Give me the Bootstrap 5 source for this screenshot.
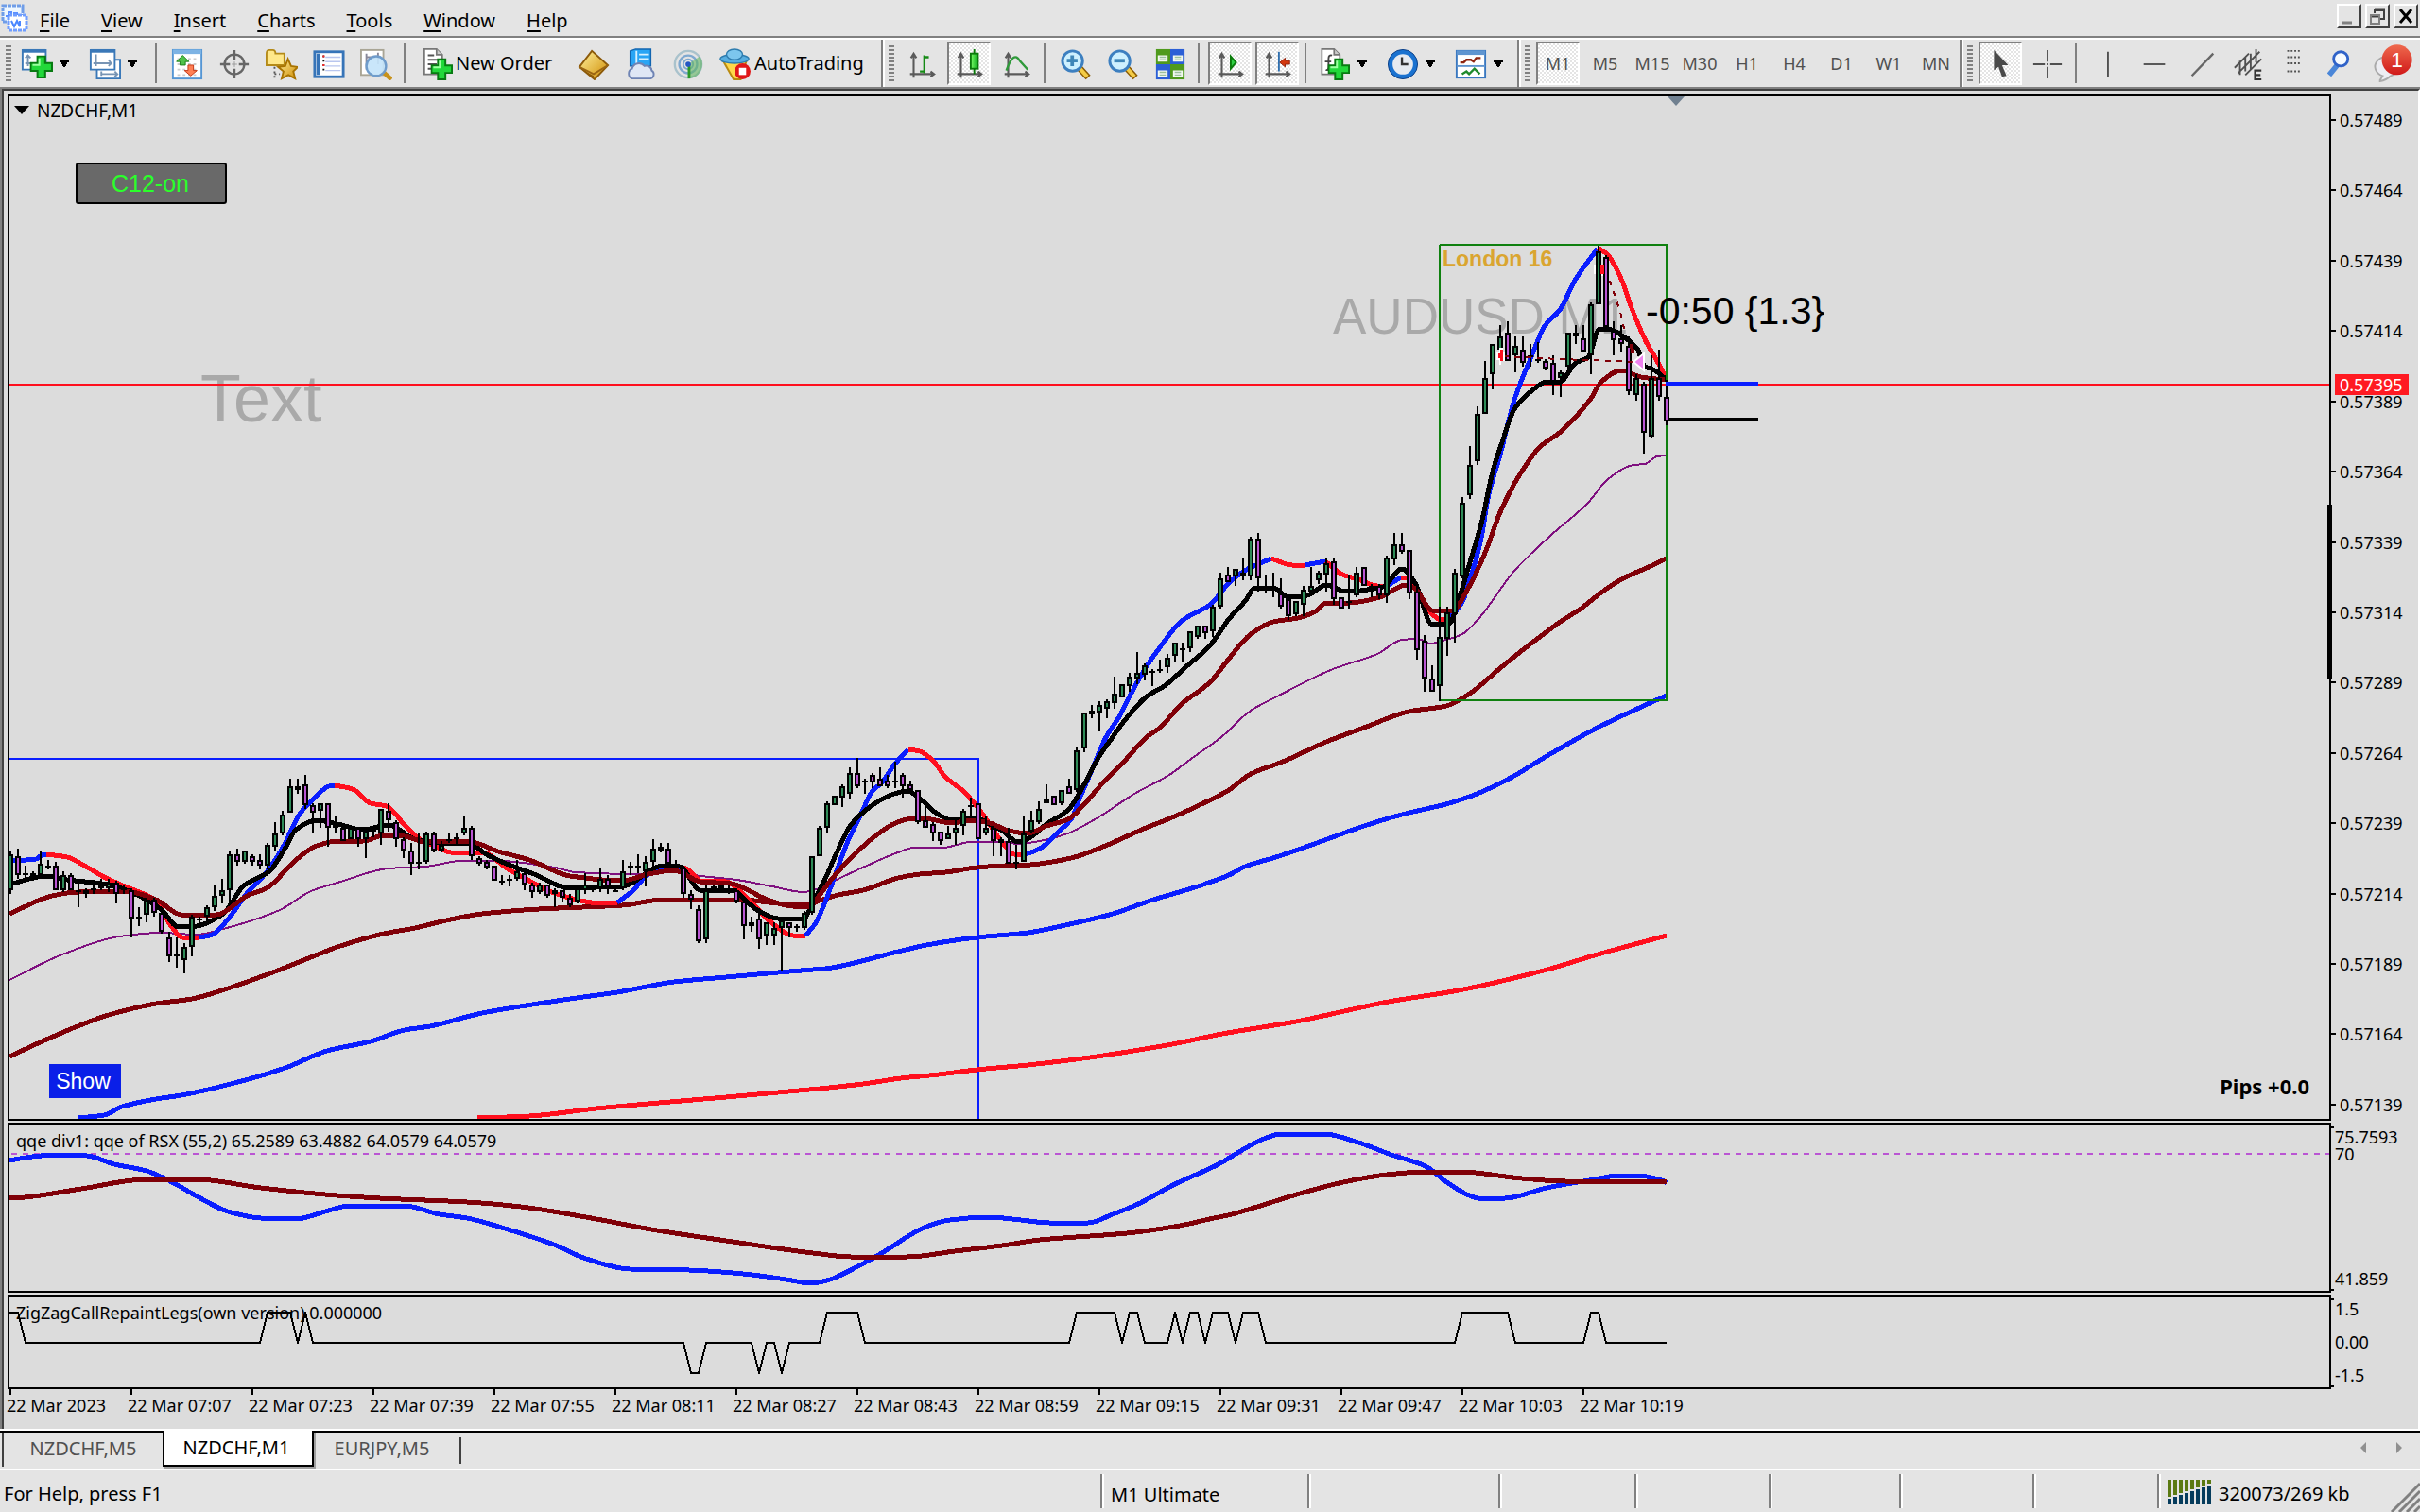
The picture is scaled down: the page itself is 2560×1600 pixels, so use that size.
<!DOCTYPE html>
<html lang="en">
<head>
<meta charset="utf-8">
<meta name="viewport" content="width=device-width, initial-scale=1">
<title>NZDCHF,M1</title>
<link href="https://cdn.jsdelivr.net/npm/bootstrap@5.3.0/dist/css/bootstrap.min.css" rel="stylesheet">
<style>
:root{--face:#e4e4e4;--canvas:#dcdcdc;--edge:#808080}
body{background:var(--face);color:#000;font-family:"Noto Sans","Open Sans",sans-serif;font-size:20px;line-height:24px;overflow:hidden}
.menubar{height:40px;border-bottom:2px solid var(--edge)}
.menubar a{color:#000;text-decoration:none;padding:6px 17px 0 16px}
.menubar u{text-underline-offset:3px}
.appicon{width:30px;height:30px;margin:0 -4px 0 0}
.winbuttons{margin-right:2px}
.winbtn{width:26px;height:26px;padding:0;margin-left:4px;border:2px solid;border-color:#fff #404040 #404040 #fff;background:var(--face);display:flex}
.toolbars{height:52px;border-top:2px solid #fff}
.band{border-right:2px solid var(--edge);box-shadow:2px 0 0 #fff;height:50px;padding-left:6px}
.band-last{border:0;box-shadow:none}
.grip{width:6px;height:38px;margin-right:4px;background:repeating-linear-gradient(var(--edge) 0 2px,transparent 2px 4px)}
.tool{width:46px;height:46px;margin:0 2px;padding:0;border:2px solid transparent;border-radius:0;background:none;color:#000;font-size:20px;line-height:24px;display:flex;align-items:center;justify-content:center}
.tool svg{width:34px;height:34px;flex:none;margin-top:2px}
.tool.drop{width:68px;justify-content:flex-start;padding-left:2px;gap:6px}
.tool.drop .caret{width:12px;height:8px}
.tool.pressed{border-color:var(--edge) #fff #fff var(--edge);background:repeating-conic-gradient(#fff 0 25%,#e4e4e4 0 50%) 0 0/4px 4px}
.tool.period{font-size:18px;color:#505050}
.tool.labelled{gap:2px;width:163px;justify-content:start;padding-left:6px}
.tool.labelled-wide{gap:4px;width:175px;justify-content:start;padding-left:3px}
.splitter{width:13px;height:42px;background:linear-gradient(var(--edge),var(--edge)) 4px 0/2px 100% no-repeat}
.workspace{border-top:2px solid var(--edge);border-left:2px solid var(--edge);min-height:0}
.chartwin{border-top:2px solid #404040;border-left:2px solid #404040;border-right:2px solid #fff;background:var(--canvas);padding:4px 0 0 4px;gap:2px;font-size:18px;min-height:0}
.plot{border:2px solid #000;position:relative;overflow:hidden;min-width:0}
.plot svg.drawing{position:absolute;inset:0;width:100%;height:100%}
.scale{width:92px;position:relative}
.price-scale{padding:15px 0 5px 9px}
.price-scale div{position:relative}
.price-scale div::before{content:"";position:absolute;left:-9px;top:11px;width:5px;height:2px;background:#000}
.small-scale{padding:6px 0 6px 4px;line-height:18px}
.small-scale::before,.small-scale::after{content:"";position:absolute;left:0;top:4px;width:3px;height:2px;background:#000}
.small-scale::after{top:auto;bottom:2px}
.pricetag{position:absolute;left:4px;right:10px;top:296px;height:22px;line-height:22px;padding-left:5px;background:#ff1a22;color:#fff}
.volbar{position:absolute;left:-4px;top:434px;width:5px;height:184px;background:#000}
.qqe{height:180px}.zigzag{height:100px}
.timeline{height:42px;margin-top:-2px}
.timeline div{width:128px;flex:none;padding-top:5px;white-space:nowrap;position:relative;left:-1px}
.timeline div::before{content:"";position:absolute;left:3px;top:0;width:2px;height:6px;background:#000}
.ptitle{position:absolute;left:7px;top:5px}
.symbol{left:5px;font-size:19px;top:3px}
.onbtn{position:absolute;left:70px;top:70px;width:160px;height:44px;border:2px solid #000;border-radius:3px;background:#696969;color:#2bff2b;font:25px/38px "Liberation Sans",sans-serif;padding:0 2px 0 0}
.showbtn{position:absolute;left:42px;bottom:22px;width:76px;height:36px;border:0;background:#0a1fe8;color:#fff;font:23px/36px "Liberation Sans",sans-serif;padding:0 4px 0 0}
.tabstrip{height:44px;border-top:2px solid #fff;border-bottom:2px solid #fff}
.tabs-in{border-top:2px solid #000;height:40px}
.tabs-in button{height:36px;border:0;background:none;color:#505050;font-size:20px;padding:0 0 3px}
.t-first{width:170px;border-left:2px solid #404040!important;margin-left:2px}
.tabs-in .t-last{width:154px;padding:0 10px 3px 0}
.t-end{width:2px;height:28px;margin-top:5px;background:#404040}
.tabs-in .t-on{width:160px;margin-top:-2px;height:38px;background:#fff;color:#000;border:2px solid #000;border-top:0;padding:0 4px 0 0;box-shadow:2px 2px 0 #a0a0a0}
.status{height:44px;line-height:42px}
.status-text{padding-top:6px}
.cell{height:36px;border-left:2px solid var(--edge);box-shadow:inset 2px 0 0 #fff;padding:2px 0 0 9px;line-height:40px;white-space:nowrap}
</style>
</head>
<body class="d-flex flex-column vh-100">
<svg width="0" height="0" class="position-absolute" aria-hidden="true">
 <defs>
  <linearGradient id="gGreen" x1="0" x2="1"><stop offset="0" stop-color="#7dff6a"/><stop offset="1" stop-color="#0aa81a"/></linearGradient>
  <linearGradient id="gGold" x1="0" x2="1" y2="1"><stop offset="0" stop-color="#fff2a0"/><stop offset="1" stop-color="#cf8b00"/></linearGradient>
  <linearGradient id="gRed" x1="0" y1="0" x2="0" y2="1"><stop offset="0" stop-color="#ef6a4e"/><stop offset="1" stop-color="#d01818"/></linearGradient>
  <symbol id="caret" viewBox="0 0 12 8"><path d="M1 0H11V2H9V4H8V6H7V7H5V6H4V4H3V2H1Z"/></symbol>
  <symbol id="plus" viewBox="0 0 24 24"><path d="M8 1h8v7h7v8h-7v7H8v-7H1V8h7z" fill="#22d83a" stroke="#087a12" stroke-width="2"/><path d="M10 3v7H3" stroke="#9dffa0" stroke-width="2" fill="none"/></symbol>
  <symbol id="axes" viewBox="0 0 32 32"><path d="M6 30V4M2 26H28M3 8L6 3L9 8M25 23L29 26L25 29" stroke="#5a5a5a" stroke-width="2.2" fill="none"/></symbol>
  <symbol id="lens" viewBox="0 0 34 34"><path d="M20 20L30 31" stroke="#8a5a00" stroke-width="7"/><path d="M20 20L29 30" stroke="#f4cc45" stroke-width="4"/><circle cx="13" cy="13" r="11" fill="#cdf0ff" stroke="#3c7fc0" stroke-width="3"/></symbol>
  <symbol id="sheet" viewBox="0 0 28 34"><path d="M2 1H17L24 8V32H2Z" fill="#fff" stroke="#777" stroke-width="2"/><path d="M17 1V8H24" fill="#ccc" stroke="#777" stroke-width="2"/></symbol>
 </defs>
</svg>

<nav class="menubar d-flex align-items-center">
 <svg class="appicon" viewBox="0 0 30 30"><rect x="3" y="2" width="21" height="17" fill="#eef7ff" stroke="#6f9de8" stroke-width="3" stroke-dasharray="4 1"/><path d="M6 13h3v-4h3v5h3v-4h3v5" stroke="#5a8fff" stroke-width="2" fill="none"/><rect x="9" y="12" width="19" height="16" fill="#fff" stroke="#6f9dff" stroke-width="3" stroke-dasharray="4 1"/><path d="M12 18l3 6 3-6 3 6V18" stroke="#4a86ff" stroke-width="2" fill="none"/></svg>
 <a href="#"><u>F</u>ile</a><a href="#"><u>V</u>iew</a><a href="#"><u>I</u>nsert</a><a href="#"><u>C</u>harts</a><a href="#"><u>T</u>ools</a><a href="#"><u>W</u>indow</a><a href="#"><u>H</u>elp</a>
 <div class="winbuttons ms-auto d-flex align-self-start pt-1">
  <button class="winbtn" aria-label="Minimize"><svg width="22" height="22"><path d="M4 18H14" stroke="#808080" stroke-width="3"/></svg></button>
  <button class="winbtn" aria-label="Restore"><svg width="22" height="22" fill="none" stroke="#404040" stroke-width="2"><path d="M8 8V5H18V14H14"/><path d="M8 4H19M3 11H14" stroke-width="3"/><path d="M4 10H13V19H4Z" stroke="#808080"/></svg></button>
  <button class="winbtn" aria-label="Close"><svg width="22" height="22"><path d="M5 4L17 18M17 4L5 18" stroke="#000" stroke-width="3"/></svg></button>
 </div>
</nav>

<div class="toolbars d-flex">
 <div class="band d-flex align-items-center">
  <span class="grip"></span>
  <button class="tool drop" aria-label="New chart"><svg viewBox="0 0 36 36"><path d="M2 2H28V24H2Z" fill="#fff" stroke="#3a78b8" stroke-width="2"/><path d="M2 3H28" stroke="#3a78b8" stroke-width="4"/><path d="M8 8V20M5 11l3-3 3 3M5 17H15" stroke="#7794b4" stroke-width="2" fill="none"/><use href="#plus" x="10" y="8" width="26" height="26"/></svg><svg class="caret"><use href="#caret"/></svg></button>
  <button class="tool drop" aria-label="Profiles"><svg viewBox="0 0 36 36"><path d="M9 13H35V34H9Z" fill="#fff" stroke="#3a78b8" stroke-width="2"/><path d="M2 2H29V24H2Z" fill="#fff" stroke="#3a78b8" stroke-width="2"/><path d="M2 3H29" stroke="#3a78b8" stroke-width="4"/><path d="M8 7V20M5 17H25M22 13l3 4-3 3M13 29H32M29 26l3 3-3 3M14 26V31" stroke="#7794b4" stroke-width="2" fill="none"/></svg><svg class="caret"><use href="#caret"/></svg></button>
  <span class="splitter"></span>
  <button class="tool" aria-label="Market Watch"><svg viewBox="0 0 36 36"><rect x="2" y="2" width="32" height="32" fill="#fff" stroke="#5596d4" stroke-width="2"/><path d="M2 4H34" stroke="#7db3e4" stroke-width="5"/><path d="M7 12H31M7 18H31M7 24H31M7 30H31" stroke="#ccc" stroke-width="2" stroke-dasharray="3 3"/><path d="M13 8L20 15H16V19H10V15H6Z" fill="#4fc24a" stroke="#1c7d18"/><path d="M22 31L29 25H25V19H19V25H15Z" fill="#ff8055" stroke="#c23411"/></svg></button>
  <button class="tool" aria-label="Data Window"><svg viewBox="0 0 36 36" fill="none" stroke="#666" stroke-width="2.5"><circle cx="18" cy="18" r="11"/><path d="M18 2V13M18 23V34M2 18H13M23 18H34"/><path d="M18 15V21M15 18H21" stroke="#999" stroke-width="1"/></svg></button>
  <button class="tool" aria-label="Navigator"><svg viewBox="0 0 36 36"><path d="M1 6Q1 2 4 2H8Q11 2 11 6H21V19H1Z" fill="#ffe88a" stroke="#b48a18" stroke-width="2"/><path d="M10 21V34M10 29H16" stroke="#555" stroke-width="2" stroke-dasharray="2 3"/><path d="M25 12L28.500 20L36 21L31 26L33 34L25.500 30L18 34L20 26L14 21L22 20Z" fill="url(#gGold)" stroke="#a87300" stroke-width="2"/></svg></button>
  <button class="tool" aria-label="Terminal"><svg viewBox="0 0 36 36"><rect x="2" y="4" width="32" height="28" fill="#fff" stroke="#3674b8" stroke-width="3"/><path d="M6 6V30" stroke="#3674b8" stroke-width="4"/><path d="M14 10H31M14 15H31M14 20H31M14 25H31" stroke="#b9c6ee" stroke-width="1.500"/><path d="M12 8V27" stroke="#111" stroke-width="2" stroke-dasharray="2 3"/><path d="M12 8V22" stroke="#f22" stroke-width="2" stroke-dasharray="2 8"/></svg></button>
  <button class="tool" aria-label="Strategy Tester"><svg viewBox="0 0 36 36"><rect x="1" y="2" width="25" height="28" fill="#fff" stroke="#a9a595" stroke-width="2"/><path d="M7 6V24M11 9V14M20 5V18M7 10H22" stroke="#889" stroke-width="2"/><path d="M25 26L35 35" stroke="#c8921a" stroke-width="5"/><circle cx="18" cy="20" r="11" fill="#c4e4fa" fill-opacity=".92" stroke="#6f9ccb" stroke-width="2.500"/></svg></button>
  <span class="splitter"></span>
  <button class="tool labelled"><svg viewBox="0 0 36 36"><use href="#sheet" x="0" y="0" width="28" height="31"/><path d="M7 8H14M7 13H20M7 18H17M7 23H12" stroke="#555" stroke-width="2"/><use href="#plus" x="10" y="11" width="25" height="25"/></svg><span>New Order</span></button>
  <button class="tool" aria-label="MetaEditor"><svg viewBox="0 0 36 36"><path d="M2 21L16 3L34 19L19 35Z" fill="url(#gGold)" stroke="#8c5a0a" stroke-width="2"/><path d="M2 21L18 29L34 19" fill="none" stroke="#9a6412" stroke-width="2"/><path d="M4 23L18 31V34Z" fill="#8c5a0a"/></svg></button>
  <button class="tool" aria-label="Virtual Hosting"><svg viewBox="0 0 36 36"><path d="M6 3L12 1H29V20H6Z" fill="#29a5f5" stroke="#1265b0" stroke-width="1.500"/><path d="M13 3V20M16 7H27M16 12H27" stroke="#d7f1ff" stroke-width="2"/><path d="M8 34A6 6 0 0 1 8 23A8 8 0 0 1 22 20A6 6 0 0 1 30 25A5 5 0 0 1 29 34Z" fill="#dfe7f5" stroke="#6f84b4" stroke-width="2"/></svg></button>
  <button class="tool" aria-label="Signals"><svg viewBox="0 0 36 36" fill="none"><circle cx="18" cy="18" r="15" stroke="#a9c2cc" stroke-width="2.500"/><circle cx="18" cy="18" r="10" stroke="#7fa9d0" stroke-width="2.500"/><circle cx="18" cy="18" r="5.500" stroke="#7aa6cf" stroke-width="2"/><path d="M18 18V34A16 16 0 0 0 31 9Z" fill="#62b562" fill-opacity=".6"/><path d="M19 18V34" stroke="#2a9a2a" stroke-width="3"/><circle cx="18" cy="18" r="3" fill="#2457c4"/></svg></button>
  <button class="tool labelled-wide"><svg viewBox="0 0 36 36"><path d="M4 12L32 12L25 35H17Z" fill="#ffd84a" stroke="#b98a10" stroke-width="2"/><ellipse cx="18" cy="12" rx="16" ry="5" fill="#57aee0" stroke="#2e7cae" stroke-width="1.500"/><ellipse cx="18" cy="7" rx="9" ry="6" fill="#7cc6ee" stroke="#2e7cae" stroke-width="1.500"/><circle cx="27" cy="26" r="9" fill="#e01818"/><rect x="23" y="22" width="8" height="8" fill="#fff"/></svg><span>AutoTrading</span></button>
 </div>
 <div class="band d-flex align-items-center">
  <span class="grip"></span>
  <button class="tool" aria-label="Bar Chart"><svg viewBox="0 0 36 36"><use href="#axes" x="3" y="3" width="32" height="32"/><path d="M16 26H21M21 28V8M21 10H26" stroke="#158a15" stroke-width="2.500" fill="none"/></svg></button>
  <button class="tool pressed" aria-label="Candlesticks"><svg viewBox="0 0 36 36"><use href="#axes" x="3" y="3" width="32" height="32"/><path d="M24 1V29" stroke="#0a7a0a" stroke-width="2"/><rect x="20" y="6" width="8" height="17" fill="url(#gGreen)" stroke="#0a7a0a" stroke-width="2"/></svg></button>
  <button class="tool" aria-label="Line Chart"><svg viewBox="0 0 36 36"><use href="#axes" x="3" y="3" width="32" height="32"/><path d="M7 25Q15 2 22 14L31 24" stroke="#2f9a3a" stroke-width="2.500" fill="none"/></svg></button>
  <span class="splitter"></span>
  <button class="tool" aria-label="Zoom In"><svg viewBox="0 0 36 36"><use href="#lens" x="1" y="1" width="35" height="35"/><path d="M8 14H20M14 8V20" stroke="#3f86b8" stroke-width="4"/></svg></button>
  <button class="tool" aria-label="Zoom Out"><svg viewBox="0 0 36 36"><use href="#lens" x="1" y="1" width="35" height="35"/><path d="M8 14H20" stroke="#3f86b8" stroke-width="4"/></svg></button>
  <button class="tool" aria-label="Tile Windows"><svg viewBox="0 0 36 36"><path d="M2 1H18V18H2Z" fill="#4f9a1c"/><path d="M18 1H34V18H18Z" fill="#2b5fd6"/><path d="M2 18H18V35H2Z" fill="#2b5fd6"/><path d="M18 18H34V35H18Z" fill="#4f9a1c"/><path d="M4 8H15V15H4ZM21 8H32V15H21ZM4 25H15V32H4ZM21 25H32V32H21Z" fill="#f2f8f0"/><path d="M6 10H13M6 13H13M23 10H30M23 13H30M6 27H13M6 30H13M23 27H30M23 30H30" stroke="#9cc09c" stroke-width="1.500"/></svg></button>
  <span class="splitter"></span>
  <button class="tool pressed" aria-label="Auto Scroll"><svg viewBox="0 0 36 36"><use href="#axes" x="3" y="3" width="32" height="32"/><path d="M19 9L25 16L19 23Z" fill="#2fd044" stroke="#0a7a0a" stroke-width="2"/></svg></button>
  <button class="tool pressed" aria-label="Chart Shift"><svg viewBox="0 0 36 36"><use href="#axes" x="3" y="3" width="32" height="32"/><path d="M20 4V26" stroke="#2f6fae" stroke-width="2"/><path d="M21 16L27 11V14H32V18H27V21Z" fill="#d4380e" stroke="#94200a"/></svg></button>
  <span class="splitter"></span>
  <button class="tool drop" aria-label="Indicators"><svg viewBox="0 0 36 36"><use href="#sheet" x="1" y="0" width="27" height="31"/><path d="M8 24Q11 26 11 20V12Q11 7 15 8M7 15H14" stroke="#444" stroke-width="2" fill="none"/><use href="#plus" x="10" y="11" width="25" height="25"/></svg><svg class="caret"><use href="#caret"/></svg></button>
  <button class="tool drop" aria-label="Periods"><svg viewBox="0 0 36 36"><circle cx="18" cy="18" r="14" fill="#e6eaf0" stroke="#1a72d0" stroke-width="5"/><circle cx="18" cy="18" r="16.500" fill="none" stroke="#0c3f86" stroke-width="1"/><path d="M17 10V18H24" stroke="#333" stroke-width="2.500" fill="none"/></svg><svg class="caret"><use href="#caret"/></svg></button>
  <button class="tool drop" aria-label="Templates"><svg viewBox="0 0 36 36"><rect x="2" y="3" width="32" height="30" fill="#fff" stroke="#3a78c0" stroke-width="2"/><path d="M2 5H34" stroke="#5f95d0" stroke-width="5"/><path d="M2 20H34" stroke="#5f95d0" stroke-width="2"/><path d="M6 16H10L13 13H18L21 15L24 11H29" stroke="#8e2410" stroke-width="2.500" fill="none"/><path d="M8 29L13 26L16 29L22 23L28 29" stroke="#1f8a2c" stroke-width="2.500" fill="none"/></svg><svg class="caret"><use href="#caret"/></svg></button>
 </div>
 <div class="band d-flex align-items-center">
  <span class="grip"></span>
  <button class="tool period pressed">M1</button><button class="tool period">M5</button><button class="tool period">M15</button><button class="tool period">M30</button><button class="tool period">H1</button><button class="tool period">H4</button><button class="tool period">D1</button><button class="tool period">W1</button><button class="tool period">MN</button>
 </div>
 <div class="band band-last d-flex align-items-center">
  <span class="grip"></span>
  <button class="tool pressed" aria-label="Cursor"><svg viewBox="0 0 36 36"><path d="M11 2L27 19H20L25 31L20 32L16 21L11 25Z" fill="#4a4a4a"/></svg></button>
  <button class="tool" aria-label="Crosshair"><svg viewBox="0 0 36 36"><path d="M18 2V15M18 21V34M2 18H15M21 18H34M17 18H19" stroke="#505050" stroke-width="2"/></svg></button>
  <span class="splitter"></span>
  <button class="tool" aria-label="Vertical Line"><svg viewBox="0 0 36 36"><path d="M19 4V32" stroke="#505050" stroke-width="2"/></svg></button>
  <button class="tool" aria-label="Horizontal Line"><svg viewBox="0 0 36 36"><path d="M6 18H30" stroke="#505050" stroke-width="2"/></svg></button>
  <button class="tool" aria-label="Trendline"><svg viewBox="0 0 36 36"><path d="M7 31L31 6" stroke="#666" stroke-width="2.500"/></svg></button>
  <button class="tool" aria-label="Equidistant Channel"><svg viewBox="0 0 36 36" fill="none" stroke="#505050" stroke-width="2"><path d="M2 22L18 6M6 28L30 4M14 30L32 12M8 14V30M14 10V26M20 6V24M26 1V16"/><path d="M32 25H25V35H32M25 30H31" stroke="#333" stroke-width="2.500"/></svg></button>
  <button class="tool" aria-label="Fibonacci"><svg viewBox="0 0 36 36"><path d="M8 3H24M8 10H24M8 17H24M8 26H24" stroke="#505050" stroke-width="2" stroke-dasharray="2 2"/></svg></button>
  <button class="tool" aria-label="Search"><svg viewBox="0 0 36 36"><path d="M11 19L2 30" stroke="#4a86d8" stroke-width="6"/><circle cx="15" cy="12" r="8" fill="#f5faff" stroke="#2f62c8" stroke-width="3"/></svg></button>
  <button class="tool" aria-label="Notifications"><svg class="overflow-visible" viewBox="0 0 36 36"><path d="M6 36L9 31A13 11 0 1 1 18 31Q13 36 6 37Z" fill="#ededf2" stroke="#aaa" stroke-width="2"/><circle cx="25" cy="13" r="17" fill="url(#gRed)"/><text x="25" y="21" text-anchor="middle" font-family="Liberation Sans,sans-serif" font-size="24" fill="#fff">1</text></svg></button>
 </div>
</div>

<main class="workspace flex-grow-1 d-flex flex-column">
 <div class="chartwin flex-grow-1 d-flex flex-column">
  <section class="d-flex flex-grow-1">
   <div class="plot flex-grow-1">
    <svg class="drawing"><g id="price" transform="translate(-10 -102)"></g></svg>
    <div class="ptitle symbol d-flex align-items-center gap-2"><svg width="16" height="10"><path d="M0 0H16L8 9Z"/></svg>NZDCHF,M1</div>
    <button class="onbtn">C12-on</button>
    <button class="showbtn">Show</button>
   </div>
   <div class="scale price-scale d-flex flex-column justify-content-between">
    <div>0.57489</div><div>0.57464</div><div>0.57439</div><div>0.57414</div><div>0.57389</div><div>0.57364</div><div>0.57339</div><div>0.57314</div><div>0.57289</div><div>0.57264</div><div>0.57239</div><div>0.57214</div><div>0.57189</div><div>0.57164</div><div>0.57139</div>
    <span class="pricetag">0.57395</span><span class="volbar"></span>
   </div>
  </section>
  <section class="qqe d-flex">
   <div class="plot flex-grow-1">
    <svg class="drawing"><g id="qqe" transform="translate(-10 -1190)"></g></svg>
    <div class="ptitle">qqe div1: qqe of RSX (55,2) 65.2589 63.4882 64.0579 64.0579</div>
   </div>
   <div class="scale small-scale d-flex flex-column"><div>75.7593</div><div>70</div><div class="mt-auto">41.859</div></div>
  </section>
  <section class="zigzag d-flex">
   <div class="plot flex-grow-1">
    <svg class="drawing"><g id="zigzag" transform="translate(-10 -1372)"></g></svg>
    <div class="ptitle">ZigZagCallRepaintLegs(own version) 0.000000</div>
   </div>
   <div class="scale small-scale d-flex flex-column justify-content-between"><div>1.5</div><div>0.00</div><div>-1.5</div></div>
  </section>
  <div class="timeline d-flex">
   <div>22 Mar 2023</div><div>22 Mar 07:07</div><div>22 Mar 07:23</div><div>22 Mar 07:39</div><div>22 Mar 07:55</div><div>22 Mar 08:11</div><div>22 Mar 08:27</div><div>22 Mar 08:43</div><div>22 Mar 08:59</div><div>22 Mar 09:15</div><div>22 Mar 09:31</div><div>22 Mar 09:47</div><div>22 Mar 10:03</div><div>22 Mar 10:19</div>
  </div>
 </div>
</main>

<div class="tabstrip">
 <div class="tabs-in d-flex">
  <button class="t-first">NZDCHF,M5</button><button class="t-on">NZDCHF,M1</button><button class="t-last">EURJPY,M5</button><span class="t-end"></span>
  <svg class="ms-auto me-3 mt-2" width="50" height="16" fill="#909090"><path d="M9 2V14L3 8ZM41 2V14L47 8Z"/></svg>
 </div>
</div>

<footer class="status d-flex align-items-center position-relative">
 <div class="status-text flex-grow-1 ps-1">For Help, press F1</div>
 <div class="cell" style="width:219px">M1 Ultimate</div>
 <div class="cell" style="width:202px"></div>
 <div class="cell" style="width:144px"></div>
 <div class="cell" style="width:142px"></div>
 <div class="cell" style="width:138px"></div>
 <div class="cell" style="width:141px"></div>
 <div class="cell" style="width:132px"></div>
 <div class="cell d-flex align-items-center" style="width:278px"><svg id="traffic" class="me-2" width="46" height="26"></svg><span class="pt-1">320073/269 kb</span></div>
 <svg class="position-absolute end-0 bottom-0" width="32" height="32" stroke="#808080" stroke-width="3"><path d="M2 32L32 2M10 32L32 10M18 32L32 18M26 32L32 26"/></svg>
</footer>

<script src="https://cdn.jsdelivr.net/npm/bootstrap@5.3.0/dist/js/bootstrap.bundle.min.js"></script>
<script>
const NS='http://www.w3.org/2000/svg';
function add(parent,tag,attrs,text){const e=document.createElementNS(NS,tag);for(const k in attrs)e.setAttribute(k,attrs[k]);if(text)e.textContent=text;parent.appendChild(e);return e}
function line(parent,pts,color,width,extra){return add(parent,'polyline',Object.assign({points:pts,fill:'none',stroke:color,'stroke-width':width,'shape-rendering':'crispEdges','stroke-linejoin':'round'},extra||{}))}
/* monotone cubic through the sample points, so averages bend without overshoot */
function curve(parent,pts,color,width){
 const p=pts.split(' ').map(s=>s.split(',').map(Number)),n=p.length,d=[],m=[];
 for(let i=0;i<n-1;i++)d.push((p[i+1][1]-p[i][1])/(p[i+1][0]-p[i][0]));
 for(let i=0;i<n;i++)m.push(i===0?d[0]:i===n-1?d[n-2]:d[i-1]*d[i]<=0?0:2*d[i-1]*d[i]/(d[i-1]+d[i]));
 let s='M'+p[0];
 for(let i=0;i<n-1;i++){const h=(p[i+1][0]-p[i][0])/3;s+='C'+[p[i][0]+h,p[i][1]+m[i]*h,p[i+1][0]-h,p[i+1][1]-m[i+1]*h,p[i+1][0],p[i+1][1]].join(' ')}
 return add(parent,'path',{d:s,fill:'none',stroke:color,'stroke-width':width,'shape-rendering':'crispEdges'});
}
const BLUE='#0a1eff',RED='#ff0f1e',MAROON='#800008',VIOLET='#7f107f',ORCHID='#ba55d3';
const price=document.getElementById('price');

/* session boxes, watermarks and the bid line */
add(price,'text',{x:1410,y:353,'font-size':53,'font-family':'Liberation Sans,sans-serif',fill:'#a9a9a9'},'AUDUSD M1');
add(price,'text',{x:212,y:446,'font-size':70,'font-family':'Liberation Sans,sans-serif',fill:'#a9a9a9'},'Text');
line(price,'10,407 2600,407',RED,2);
line(price,'10,803 1035,803 1035,1184',BLUE,2);
add(price,'text',{x:1526,y:282,'font-size':23,'font-weight':700,'font-family':'Liberation Sans,sans-serif',fill:'#daa530'},'London 16');
add(price,'path',{d:'M1764 102H1782L1773 112Z',fill:'#708090'});

/* slow averages */
curve(price,'82,1183 110,1180 129,1171 165,1163 192,1159 263,1142 302,1130 346,1112 392,1102 428,1090 455,1086 510,1072 603,1057 653,1050 713,1039 768,1034 823,1029 860,1026 873,1025 950,1007 980,1000 1033,992 1087,987 1127,979 1177,967 1217,953 1267,938 1300,926 1317,917 1353,906 1393,892 1443,874 1483,862 1533,850 1560,841 1600,822 1633,802 1688,771 1732,750 1763,736',BLUE,5);
curve(price,'505,1183 560,1181 631,1173 697,1167 768,1161 823,1156 867,1152 913,1147 953,1141 993,1137 1033,1132 1087,1127 1153,1119 1193,1113 1240,1105 1293,1094 1371,1081 1469,1060 1543,1048 1633,1027 1690,1010 1763,990',RED,5);
curve(price,'10,1118 49,1100 82,1086 115,1074 165,1062 203,1057 241,1046 291,1028 329,1013 357,1002 406,988 439,982 472,974 510,967 570,962 658,958 702,952 784,952 823,956 856,957 867,953 887,947 913,942 950,929 973,925 1000,923 1033,918 1063,916 1090,915 1133,908 1167,896 1210,877 1240,865 1273,850 1300,836 1323,819 1357,806 1403,785 1443,770 1490,753 1530,747 1556,733 1587,707 1617,683 1652,657 1671,645 1694,627 1717,612 1744,600 1763,591',MAROON,5);
curve(price,'10,1037 66,1010 126,991 170,987 208,989 236,983 296,963 329,943 357,934 411,919 450,917 488,911 527,911 587,918 609,923 675,925 713,923 741,927 779,931 817,938 850,944 867,940 887,930 917,916 950,902 967,897 997,897 1027,891 1060,891 1077,893 1100,890 1127,883 1160,866 1200,840 1237,820 1260,803 1292,780 1323,752 1347,739 1410,708 1457,692 1483,677 1500,676 1513,681 1533,676 1547,671 1564,655 1602,604 1640,567 1679,533 1701,507 1728,492 1740,491 1753,483 1763,482',VIOLET,2);

/* fast two-colour average */
[['b','10,911 38,909 44,905 49,904'],['r','49,904 71,907 91,917 110,928 132,938 165,953 181,980 193,992 211,992'],['b','211,992 225,989 241,973 263,943 282,923 299,897 318,860 335,842 348,832 354,831'],['r','354,831 373,835 392,850 409,853 428,873 444,888 466,898 477,902 510,902 538,920 560,932 581,943 614,953 636,956 653,955'],['b','653,955 669,943 686,925 708,917 719,917'],['r','719,917 728,920 741,932 768,933 790,950 817,977 839,990 852,990'],['b','852,990 862,978 872,957 883,927 897,890 910,863 923,837 933,828 947,808 961,793'],['r','961,793 973,795 987,805 1000,822 1020,838 1037,858 1050,877 1063,895 1073,904 1085,904'],['b','1085,904 1100,898 1120,880 1133,867 1143,843 1157,810 1170,780 1183,760 1197,733 1213,705 1227,685 1250,657 1280,640 1300,617 1320,602 1345,591'],['r','1345,591 1367,598 1380,598'],['b','1380,598 1402,594'],['r','1402,594 1420,608 1437,613 1457,620 1467,620'],['b','1467,620 1482,611'],['r','1482,611 1488,611 1500,627 1513,648 1525,656 1533,655'],['b','1533,655 1547,637 1554,616 1566,574 1575,523 1587,481 1602,423 1621,375 1634,345 1650,328 1667,295 1690,263'],['r','1690,262 1701,270 1715,295 1726,326 1742,363 1753,382 1762,400']].forEach(s=>curve(price,s[1],s[0]==='b'?BLUE:RED,5));
curve(price,'10,936 49,927 71,931 115,936 143,946 170,962 189,981 208,980 236,967 258,937 285,922 302,897 313,878 335,868 357,872 384,878 411,873 439,888 466,892 494,892 516,905 538,915 565,925 603,940 631,939 658,938 702,916 719,917 741,942 773,942 801,963 823,972 850,972 860,955 873,930 883,907 900,873 923,852 943,841 960,837 973,845 990,860 1007,868 1033,866 1047,872 1060,879 1077,891 1090,886 1107,872 1130,857 1147,830 1163,800 1177,780 1190,762 1213,737 1233,725 1253,707 1280,683 1300,655 1318,635 1327,622 1347,622 1363,632 1383,630 1403,619 1423,626 1463,621 1483,602 1497,617 1515,661 1533,660 1543,635 1552,605 1568,550 1579,499 1589,468 1602,433 1621,413 1636,404 1650,404 1667,384 1680,378 1692,348 1705,349 1717,356 1732,369 1740,388 1749,391 1763,402','#000',5);
curve(price,'10,967 55,948 82,944 132,943 165,952 192,968 228,968 263,947 282,940 313,910 335,895 357,890 384,890 406,884 428,885 450,891 494,890 527,901 560,910 603,927 658,932 686,925 713,921 741,933 773,935 812,952 839,959 857,959 867,947 880,930 900,908 923,887 943,873 960,867 977,866 1007,871 1027,868 1047,871 1067,879 1087,882 1107,874 1130,867 1147,851 1167,828 1187,808 1213,780 1227,770 1250,745 1280,722 1300,697 1323,671 1347,658 1373,654 1390,648 1403,638 1427,638 1460,632 1487,619 1497,623 1515,646 1537,646 1550,628 1571,585 1587,542 1606,505 1629,473 1652,456 1682,423 1694,404 1715,392 1736,399 1761,402',MAROON,5);
line(price,'1523,259 1763,259 1763,741 1523,741 1523,259','#0f800f',2);

/* candles: body top, body bottom, wick top, wick bottom, u(p) / d(own) / n(eutral); each block has its own origin and units per pixel */
const blocks=[
{y:780,k:3,d:'372 485 362 500u,380 435 353 448d,430 435 408 460n,432 445 428 450d,400 440 360 450u,408 412 390 418n,408 485 398 485d,435 485 427 490u,435 487 430 487d,484 490 455 540n,488 500 480 508u,480 485 460 497n,468 482 450 487d,462 480 448 490u,462 500 455 525d,480 488 470 500d,487 573 480 635d,570 575 540 600n,515 563 508 590u,517 560 512 570d,560 615 555 625d,635 693 615 713d,687 693 637 730n,668 705 655 748u,570 668 565 695u,573 580 570 600n,540 570 535 580u,505 540 470 550u,487 505 450 525u,373 487 360 530u,373 393 355 410d,362 393 358 400u,375 397 372 410d,390 410 373 418d,343 410 338 420u,307 345 270 360u,247 303 235 310u,157 237 132 240u,157 170 132 180u,152 218 121 225d,218 238 210 305d,212 232 210 290u,212 290 210 347d,275 285 253 303d,288 328 280 330d,290 322 285 325u,290 325 285 347d,302 322 290 383u,293 300 285 315n,230 303 228 340u,235 262 210 300d,267 325 262 350d,325 360 320 385d,362 400 335 437d,398 402 308 418n,307 393 302 402u,307 360 302 365d,340 357 330 365u,322 326 307 335n,320 325 307 340n,290 305 252 310u,290 380 282 392d,383 400 378 407d,397 412 390 420d,410 453 405 455d,458 462 435 467n,452 455 435 472n,427 452 392 458u,430 470 425 487d,470 490 462 508d,468 490 460 495u,470 505 465 510d,485 500 480 540u,487 510 484 522d,508 535 500 542d,480 522 478 528u,470 487 432 495u,473 478 465 492n,452 480 415 490u,452 475 440 497d,483 487 468 490n,428 480 390 487u,410 415 397 440n,410 415 373 430n,393 425 380 475u,355 395 325 412u,345 360 337 365d,355 400 335 405d,402 405 390 412n,415 497 408 510d,500 515 485 545d,543 650 535 655d,485 640 470 655u,475 485 465 490n,470 478 465 485n,478 485 470 495n,487 520 480 525d,520 597 510 640d,590 597 570 615n,577 640 560 672d,590 632 590 660u,608 628 590 660u,580 608 575 745u,590 608 585 635d,597 600 595 617n,560 608 553 612u,380 560 375 563u,290 375 283 377u,207 285 203 305u,188 213 187 214u,157 190 150 222u,115 178 97 198u,115 153 67 160d,138 142 133 180n,121 142 115 160d,133 153 97 158d,140 158 121 160d,135 142 78 160n,117 153 115 190d,151 165 140 172d,170 268 168 273d,265 287 222 290d,273 303 270 328d,302 328 300 340d,308 322 280 326u,290 303 255 343u,235 283 230 312u,215 220 192 255n,212 322 210 322d,290 308 253 312u,285 328 283 377d,325 338 320 377d,330 400 290 402d,393 400 343 418n,308 393 253 395u,266 302 235 305u,230 272 205 275u,195 207 150 208u,188 214 188 218d,170 208 168 214u,157 178 133 180d,43 170 30 173u'},
{y:540,k:3,d:'643 755 640 767u,638 645 618 658n,620 640 605 700u,607 628 600 658u,583 610 528 628u,553 592 553 593u,530 557 517 573u,513 532 450 550u,493 520 487 540u,510 514 505 557n,505 510 475 514n,470 497 457 514u,422 460 422 480u,435 440 422 478n,385 440 383 450u,368 400 366 405u,368 388 366 405d,308 382 297 400u,217 308 198 312u,205 225 180 228d,187 208 187 238u,200 207 150 220n,87 208 85 220u,92 218 72 258d,237 253 205 262d,242 246 197 275n,262 308 215 310d,280 333 275 345d,290 328 288 335u,253 297 240 338u,237 255 180 262u,200 220 190 235u,165 203 150 258u,163 280 150 298d,278 310 276 312d,290 296 205 312n,200 272 180 275u,182 240 180 242d,242 248 235 275n,238 272 235 280d,147 270 145 292u,110 155 72 175u,110 130 72 136d,128 262 125 280d,260 442 240 473d,415 532 397 575d,535 573 492 575d,400 555 308 605u,325 405 308 460u,200 327 188 418u'},
{y:0,k:1,d:'532 609 526 611u,491 523 472 527u,437 487 429 491u,399 437 382 438u,364 395 363 411u,356 369 344 371u,352 381 340 382d,365 376 356 394u,369 383 356 387d,376 378 364 387n,380 382 362 383n,381 389 380 392d,383 404 376 418d,393 400 392 419u,352 388 351 389u,351 356 344 363d,358 371 344 372d,322 375 320 396u,265 321 259 322u,271 345 269 347d,349 359 340 376d,357 363 344 371d,366 413 356 418d,399 418 395 423u,405 457 403 480d,399 461 376 463u,399 419 370 423d,419 445 402 449d'}];
let n=0;
const even=v=>Math.round(v/2)*2;
blocks.forEach(b=>b.d.split(',').forEach(c=>{
 const v=c.slice(0,-1).split(' ').map(t=>even(b.y+t/b.k)),kind=c.slice(-1),x=10+8*n++;
 add(price,'rect',{x:x,y:v[2],width:2,height:Math.max(2,v[3]-v[2])});
 add(price,'rect',{x:x-2,y:v[0],width:6,height:Math.max(2,v[1]-v[0])});
 if(kind!=='n'&&v[1]-v[0]>4)add(price,'rect',{x:x,y:v[0]+2,width:2,height:v[1]-v[0]-4,fill:kind==='u'?'#2e8b57':ORCHID});
}));

/* orders and projected levels */
line(price,'1590,377 1650,380 1734,383',MAROON,2,{'stroke-dasharray':'6 6'});
line(price,'1703,297 1714,330 1719,352',MAROON,2,{'stroke-dasharray':'5 7'});
line(price,'1726,364 1727,374',MAROON,4);
add(price,'path',{d:'M1583 373H1586V368H1590V372H1592V382H1588V386H1586V381H1583Z',fill:'#fff'});
add(price,'path',{d:'M1585 374H1587V370H1590V382H1587V379H1585Z',fill:RED});
add(price,'path',{d:'M1686 280H1688V290H1686ZM1694 290H1696V292H1694Z',fill:'#fff'});
add(price,'path',{d:'M1693 280H1697V290H1693Z',fill:RED});
add(price,'path',{d:'M1728 383L1739 374V392Z',fill:'#ee82ee',stroke:'#fff','stroke-width':2});
line(price,'1762,406 1860,406',BLUE,4);
line(price,'1764,444 1860,444','#000',4);
add(price,'text',{x:1741,y:343,'font-size':41,'font-family':'Liberation Sans,sans-serif'},'-0:50 {1.3}');
add(price,'text',{x:2443,y:1158,'font-size':22,'font-weight':700,'text-anchor':'end'},'Pips +0.0');

/* oscillator */
const qqe=document.getElementById('qqe');
line(qqe,'12,1221 2600,1221',ORCHID,2,{'stroke-dasharray':'6 6'});
curve(qqe,'10,1228 34,1224 60,1222 92,1223 121,1232 155,1239 184,1252 212,1268 241,1282 276,1289 313,1290 344,1282 370,1276 428,1276 465,1285 494,1289 534,1300 586,1317 620,1332 666,1343 729,1344 786,1348 832,1354 858,1358 878,1354 900,1344 931,1327 980,1298 1005,1291 1045,1288 1080,1291 1110,1294 1151,1294 1177,1285 1202,1275 1243,1253 1289,1232 1309,1220 1337,1205 1355,1200 1401,1200 1437,1209 1472,1222 1508,1234 1529,1250 1554,1265 1564,1268 1592,1268 1636,1257 1687,1248 1712,1244 1733,1244 1758,1249 1763,1252',BLUE,5);
curve(qqe,'10,1268 26,1267 86,1258 155,1248 207,1248 276,1257 344,1264 402,1268 494,1272 551,1277 631,1290 689,1301 775,1314 860,1326 900,1330 960,1330 1010,1324 1060,1318 1100,1312 1192,1305 1248,1297 1284,1289 1299,1286 1330,1277 1375,1263 1421,1251 1467,1243 1508,1240 1544,1240 1610,1247 1656,1250 1763,1250',MAROON,5);

line(document.getElementById('zigzag'),'10,1389 19,1389 27,1421 275,1421 283,1389 307,1389 315,1421 323,1389 331,1421 723,1421 731,1453 739,1453 747,1421 795,1421 803,1453 811,1421 819,1421 827,1453 835,1421 867,1421 875,1389 907,1389 915,1421 1131,1421 1139,1389 1179,1389 1187,1421 1195,1389 1203,1389 1211,1421 1235,1421 1243,1389 1251,1421 1259,1389 1267,1389 1275,1421 1283,1389 1299,1389 1307,1421 1315,1389 1331,1389 1339,1421 1539,1421 1547,1389 1595,1389 1603,1421 1675,1421 1683,1389 1691,1389 1699,1421 1763,1421','#000',2);

const traffic=document.getElementById('traffic');
for(let i=0;i<8;i++){const h=18-2*i;add(traffic,'rect',{x:6*i,y:0,width:4,height:h,fill:'#5b7a12'});add(traffic,'rect',{x:6*i,y:h+2,width:4,height:24-h,fill:'#063c5c'})}
</script>
</body>
</html>
